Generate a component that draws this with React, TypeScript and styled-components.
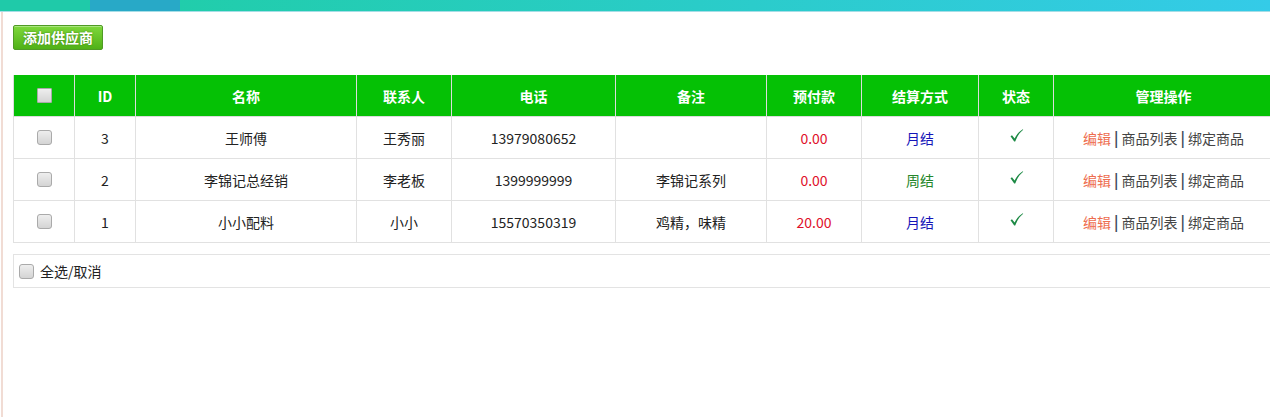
import styled, { createGlobalStyle } from 'styled-components'

const GlobalStyle = createGlobalStyle`
    html, body {
        margin: 0;
        padding: 0;
        background: #fff;
        overflow: hidden;
        font-family: "Noto Sans CJK SC", "Noto Sans", sans-serif;
    }
`

const TopBar = styled.div`
    height: 11px;
    border-bottom: 1px solid #a6dde6;
    background: linear-gradient(90deg, #1fcaa9 0, #1fcaa9 90px, #28a9c7 90px, #28a9c7 180px, #21cdab 180px, #34cbe8 100%);
`

const Page = styled.div`
    margin-left: 1px;
    border-left: 2px solid #f1dcd4;
    padding-left: 10px;
    height: 405px;
    box-sizing: border-box;
    width: 1290px;
`

const Toolbar = styled.div`
    padding-top: 12px;
    height: 25px;
`

const AddButton = styled.button`
    width: 90px;
    height: 25px;
    padding: 0;
    border: 1px solid #4f9b25;
    border-radius: 2px;
    background: linear-gradient(#7fd83c, #50b117);
    color: #fff;
    font-family: inherit;
    font-size: 14px;
    font-weight: 700;
    text-shadow: 0 0 2px #3d7f12;
    box-shadow: inset 0 1px 0 rgba(255,255,255,0.35);
    cursor: pointer;
`

const Table = styled.table`
    margin-top: 26px;
    width: 1260px;
    border-collapse: collapse;
    table-layout: fixed;
    font-size: 14px;
    color: #222;
`

const Th = styled.th`
    height: 41px;
    background: #05c105;
    color: #fff;
    font-size: 14px;
    font-weight: 700;
    border: 1px solid #dcdcdc;
    border-top: none;
    text-align: center;
    padding: 0;
`

const Td = styled.td<{ tone?: string }>`
    height: 41px;
    border: 1px solid #e1e1e1;
    text-align: center;
    padding: 0;
    color: ${({ tone }) => tone || '#222'};
`

const Box = styled.span<{ small?: boolean }>`
    display: inline-block;
    width: 15px;
    height: 15px;
    box-sizing: border-box;
    border: 1px solid #aaaaaa;
    border-radius: ${({ small }) => (small ? '1px' : '3px')};
    background: linear-gradient(#eeeeee, #d4d4d4);
    vertical-align: middle;
    margin-top: -5px;
`

const Check = styled.svg`
    width: 15px;
    height: 15px;
    vertical-align: middle;
    margin-top: -9px;
`

const Edit = styled.span`
    color: #ee6d4f;
`

const Sep = styled.span`
    color: #3c4a5c;
    font-weight: 700;
    font-size: 15px;
    margin: 0 3px;
`

const Link = styled.span`
    color: #444;
`

const Footer = styled.div`
    margin-top: 11px;
    width: 1270px;
    height: 32px;
    border: 1px solid #e3e3e3;
    display: flex;
    align-items: center;
    padding-left: 5px;
    gap: 6px;
    font-size: 14px;
    color: #222;
`

const FooterBox = styled(Box)`
    margin-top: 0;
`

const cols = [61, 61, 221, 95, 164, 151, 95, 117, 75, 220]
const heads = ['', 'ID', '名称', '联系人', '电话', '备注', '预付款', '结算方式', '状态', '管理操作']

const rows = [
    { id: 3, name: '王师傅', contact: '王秀丽', phone: '13979080652', note: '', pay: '0.00', mode: '月结' },
    { id: 2, name: '李锦记总经销', contact: '李老板', phone: '1399999999', note: '李锦记系列', pay: '0.00', mode: '周结' },
    { id: 1, name: '小小配料', contact: '小小', phone: '15570350319', note: '鸡精，味精', pay: '20.00', mode: '月结' },
]

function Tick() {
    return (
        <Check viewBox="0 0 15 15">
            <path d="M1.5 8.2 L3 7.2 L5.6 10.6 C7.5 6.5 10 3.5 13.8 1.2 L14.2 1.8 C10.8 4.5 8.3 8 6.2 13.6 L5.2 13.6 Z" fill="#1d8a45" />
        </Check>
    )
}

export default function App() {
    return (
        <>
            <GlobalStyle />
            <TopBar />
            <Page>
                <Toolbar>
                    <AddButton>添加供应商</AddButton>
                </Toolbar>
                <Table>
                    <colgroup>
                        {cols.map((w, i) => (
                            <col key={i} style={{ width: w }} />
                        ))}
                    </colgroup>
                    <thead>
                        <tr>
                            {heads.map((h, i) => (
                                <Th key={i}>{i === 0 ? <Box small /> : h}</Th>
                            ))}
                        </tr>
                    </thead>
                    <tbody>
                        {rows.map((r) => (
                            <tr key={r.id}>
                                <Td><Box /></Td>
                                <Td>{r.id}</Td>
                                <Td>{r.name}</Td>
                                <Td>{r.contact}</Td>
                                <Td>{r.phone}</Td>
                                <Td>{r.note}</Td>
                                <Td tone="#e0102b">{r.pay}</Td>
                                <Td tone={r.mode === '月结' ? '#1515b8' : '#25862a'}>{r.mode}</Td>
                                <Td><Tick /></Td>
                                <Td>
                                    <Edit>编辑</Edit>
                                    <Sep>|</Sep>
                                    <Link>商品列表</Link>
                                    <Sep>|</Sep>
                                    <Link>绑定商品</Link>
                                </Td>
                            </tr>
                        ))}
                    </tbody>
                </Table>
                <Footer>
                    <FooterBox />
                    全选/取消
                </Footer>
            </Page>
        </>
    )
}
